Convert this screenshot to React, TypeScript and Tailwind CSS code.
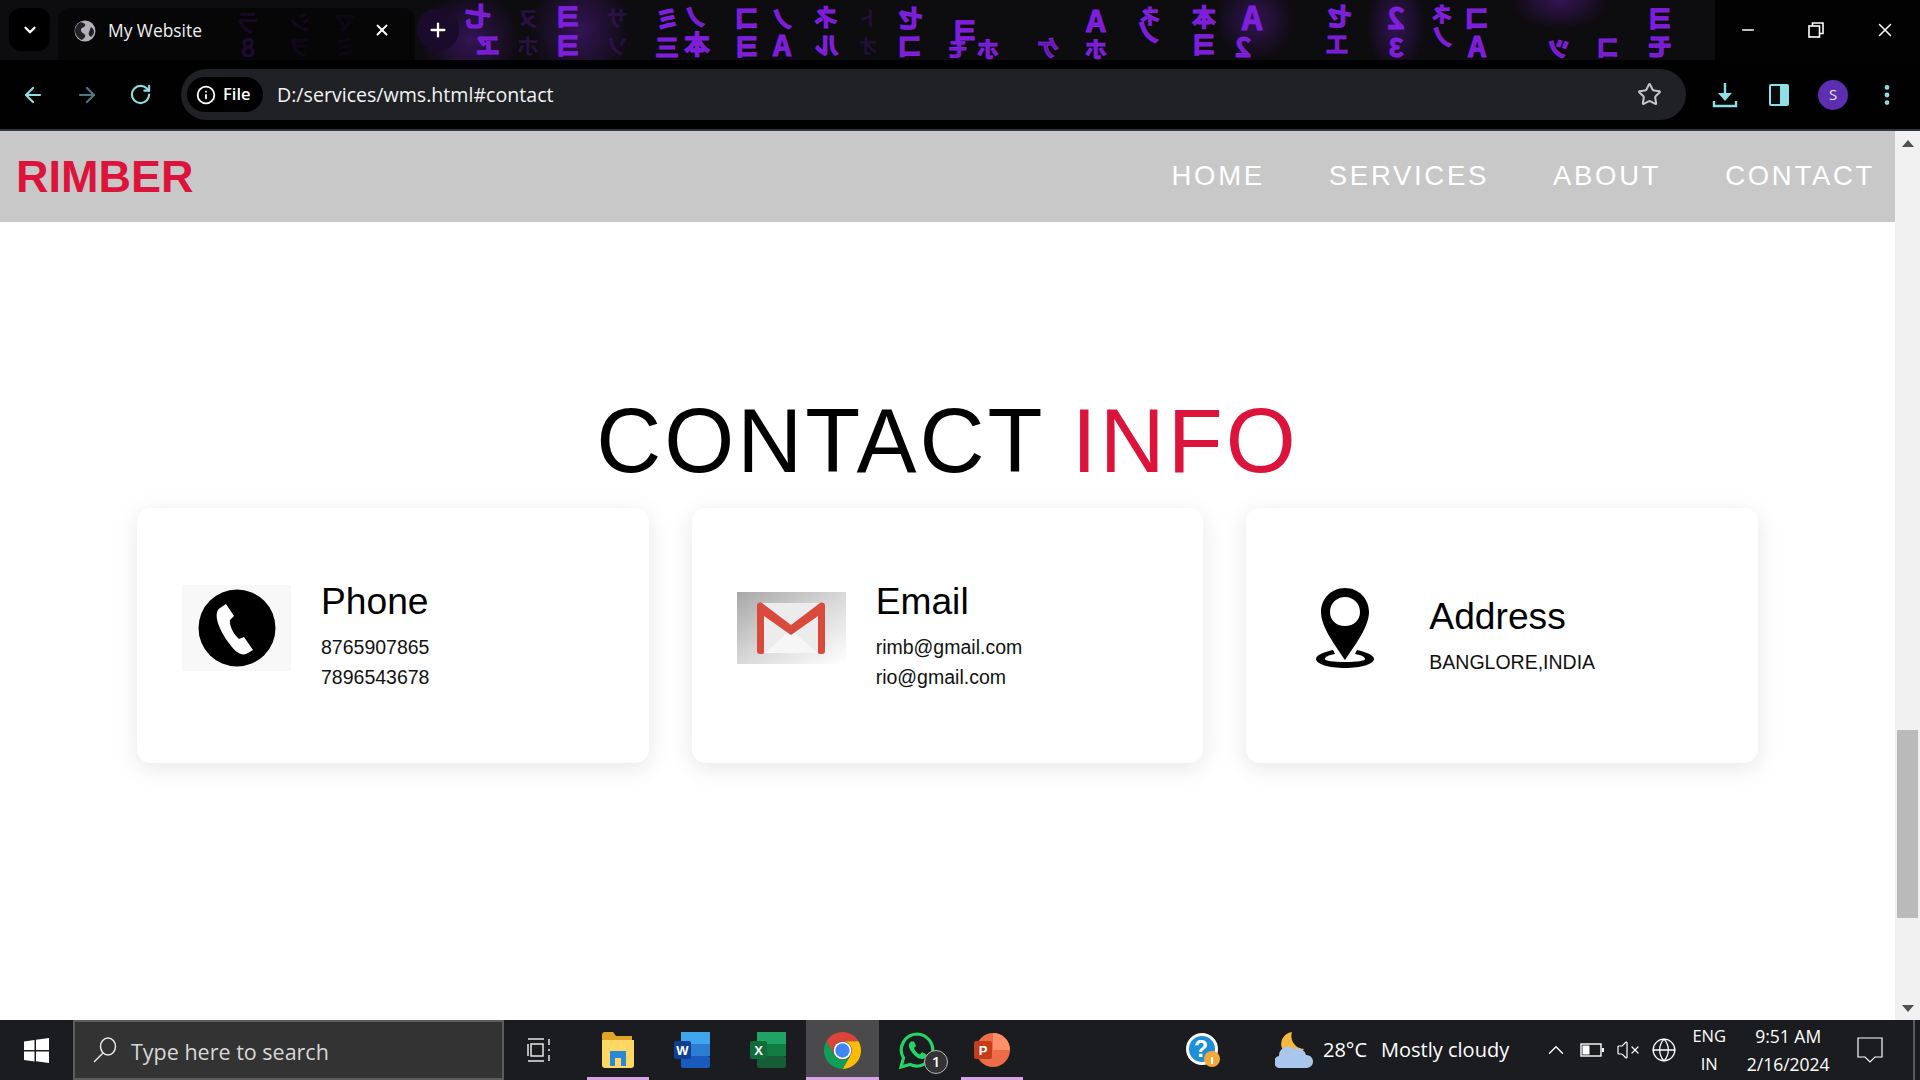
import type { ReactNode } from "react";
import { ArrowLeft, ArrowRight, RotateCw, Star, Info, ChevronDown, Plus, X, Minus, MoreVertical, ChevronUp, VolumeX, Globe } from "lucide-react";

// wallpaper glyphs: x, baseline, char, size, opacity
const glyphs: [number, number, string, number, number][] = [
  [248, 32, "ラ", 24, 0.28],[248, 57, "8", 26, 0.42],[300, 30, "シ", 22, 0.22],[300, 55, "ヲ", 22, 0.2],[345, 30, "マ", 22, 0.18],[345, 55, "ミ", 22, 0.16],
  [478, 26, "七", 26, 0.9],[488, 54, "ヱ", 24, 0.85],
  [528, 26, "ヌ", 22, 0.25],[528, 54, "ホ", 22, 0.25],[568, 26, "ヨ", 26, 0.95],[568, 55, "ヨ", 26, 0.95],
  [617, 26, "サ", 22, 0.2],[617, 54, "ソ", 22, 0.2],[667, 28, "ミ", 24, 0.95],[667, 56, "三", 24, 0.95],[695, 26, "ノ", 24, 0.9],[697, 54, "本", 26, 0.95],
  [747, 28, "コ", 26, 0.95],[747, 56, "ヨ", 26, 0.95],[782, 28, "ノ", 24, 0.95],[782, 56, "A", 28, 0.95],
  [826, 26, "ネ", 24, 0.95],[827, 54, "ル", 24, 0.95],[868, 26, "ト", 20, 0.2],[868, 54, "オ", 20, 0.2],
  [910, 28, "セ", 26, 0.95],[910, 56, "コ", 26, 0.95],[965, 40, "ヨ", 26, 0.95],[988, 57, "ホ", 22, 0.9],[958, 57, "モ", 20, 0.9],
  [1048, 56, "ケ", 22, 0.7],[1096, 32, "A", 30, 0.95],[1096, 57, "ホ", 22, 0.95],[1148, 42, "ノ", 26, 0.95],[1150, 24, "ネ", 20, 0.95],
  [1204, 26, "本", 24, 0.95],[1204, 54, "ヨ", 26, 0.95],[1252, 30, "A", 32, 0.95],[1243, 57, "2", 28, 0.95],
  [1339, 26, "セ", 26, 0.95],[1337, 52, "工", 22, 0.9],[1396, 29, "2", 30, 0.95],[1396, 57, "3", 26, 0.95],
  [1442, 22, "ネ", 20, 0.95],[1442, 46, "ノ", 24, 0.95],[1477, 28, "コ", 26, 0.95],[1477, 57, "A", 28, 0.95],
  [1559, 56, "ッ", 26, 0.9],[1608, 56, "コ", 24, 0.9],[1660, 28, "ヨ", 26, 0.95],[1660, 56, "モ", 26, 0.9],
];

function MatrixBackdrop() {
  return (
    <svg aria-hidden="true" className="absolute inset-0" width="1920" height="129" viewBox="0 0 1920 129">
      <defs>
        <radialGradient id="glow">
          <stop offset="0" stopColor="#7a22d8" stopOpacity="0.35" />
          <stop offset="1" stopColor="#7a22d8" stopOpacity="0" />
        </radialGradient>
      </defs>
      <rect width="1920" height="129" fill="#0d0c0f" />
      <ellipse cx="580" cy="30" rx="50" ry="60" fill="url(#glow)" />
      <ellipse cx="470" cy="40" rx="50" ry="50" fill="url(#glow)" />
      <ellipse cx="1396" cy="25" rx="30" ry="50" fill="url(#glow)" />
      <ellipse cx="1255" cy="20" rx="40" ry="40" fill="url(#glow)" />
      <ellipse cx="1560" cy="0" rx="50" ry="30" fill="url(#glow)" />
      {glyphs.map(([x, y, ch, size, o], i) => (
        <text
          key={i}
          x={-x}
          y={y}
          fontSize={size}
          fontWeight={700}
          fill="#8420e4"
          stroke="#8420e4"
          strokeWidth={o > 0.5 ? 1 : 0}
          fillOpacity={o}
          transform="scale(-1 1)"
          textAnchor="middle"
          fontFamily="'Noto Sans CJK JP', sans-serif"
        >
          {ch}
        </text>
      ))}
      <rect y="60" width="1920" height="69" fill="#000" fillOpacity="0.9" />
      <rect x="1715" width="205" height="60" fill="#000" fillOpacity="0.82" />
    </svg>
  );
}

function BrowserChrome() {
  return (
    <header className="relative h-[131px] shrink-0 border-b-2 border-[#2c3a3d] font-['Open_Sans',sans-serif] text-white">
      <MatrixBackdrop />
      {/* Tab strip */}
      <div className="relative flex h-[60px] items-start pt-2">
        <div className="ml-[9px] flex h-[43px] w-[41px] items-center justify-center rounded-xl bg-black">
          <ChevronDown size={18} strokeWidth={3} />
        </div>
        <div className="ml-2 flex h-[52px] w-[357px] items-center rounded-t-xl bg-black/50 pb-[6px] pl-4 pr-6">
          <svg width="22" height="22" viewBox="0 0 22 22">
            <circle cx="11" cy="11" r="10.5" fill="#b3b0ba" />
            <path d="M7 2c3 1 5 2 4 4s-4 1-4 4 3 3 4 5-1 3-3 5c-3-1-7-5-7-9s3-8 6-9zM17 7c2 1 3 3 3 5s-2 4-3 5c-2-1-3-3-2-5s1-3 2-5z" fill="#242228" />
          </svg>
          <span className="ml-3 text-[17.4px] leading-none text-[#f1eef4]">My Website</span>
          <X size={18} strokeWidth={2.5} className="ml-auto -translate-y-[1px]" />
        </div>
        <div className="ml-[2px] flex h-[43px] w-[42px] items-center justify-center rounded-full bg-[#1a0a2c]">
          <Plus size={22} strokeWidth={2.5} />
        </div>
        <div className="ml-auto flex h-[44px] items-center">
          <div className="flex w-[69px] justify-center"><Minus size={18} strokeWidth={2} /></div>
          <div className="flex w-[68px] justify-center">
            <svg width="16" height="16" viewBox="0 0 16 16" fill="none" stroke="#fff" strokeWidth="1.6">
              <rect x="1" y="4" width="10.5" height="11" />
              <path d="M4.5 4V1H15v10.500h-3.500" />
            </svg>
          </div>
          <div className="flex w-[70px] justify-center"><X size={22} strokeWidth={1.6} /></div>
        </div>
      </div>
      {/* Toolbar */}
      <div className="relative flex h-[69px] items-start pt-[9px]">
        <div className="flex h-[51px] w-[181px] items-center text-[#8fdfe4]">
          <ArrowLeft size={24} strokeWidth={2.2} className="ml-[21px]" />
          <ArrowRight size={24} strokeWidth={2.2} className="ml-[30px] text-[#4a7b80]" />
          <RotateCw size={23} strokeWidth={2.2} className="ml-[30px]" />
        </div>
        <div className="flex h-[51px] w-[1505px] items-center rounded-full bg-[#202124] pl-[6px] pr-[24px]">
          <div className="flex h-[35px] w-[76px] items-center rounded-full bg-black pl-[9px]">
            <Info size={20} strokeWidth={2.2} />
            <span className="ml-[7px] text-[16.5px] font-semibold leading-none">File</span>
          </div>
          <span className="ml-[14px] text-[19.6px] leading-none text-[#f3f3f3]">D:/services/wms.html#contact</span>
          <Star size={25} strokeWidth={2} className="ml-auto text-[#c5c5c8]" />
        </div>
        <div className="flex h-[51px] flex-1 items-center text-[#8fdfe4]">
          <svg width="26" height="26" viewBox="0 0 26 26" className="ml-[26px]" fill="none" stroke="currentColor" strokeWidth="2.4">
            <path d="M13 1v12" />
            <path d="M6 11h14l-7 8z" fill="currentColor" strokeWidth="0" />
            <path d="M2 19v5h22v-5" />
          </svg>
          <svg width="22" height="24" viewBox="0 0 22 24" className="ml-[30px]">
            <rect x="1" y="1" width="20" height="22" rx="2" fill="#8fdfe4" />
            <rect x="3" y="3" width="9" height="18" fill="#0b0b0e" />
          </svg>
          <div className="ml-[28px] flex h-[30px] w-[30px] items-center justify-center rounded-full bg-[#5b2fb0] text-[15px] text-[#e8e2f5]">S</div>
          <MoreVertical size={26} strokeWidth={2.4} className="ml-[26px]" />
        </div>
      </div>
    </header>
  );
}

function PhoneIcon() {
  return (
    <div className="flex h-[86px] w-[109px] items-center justify-center bg-[#f8f8f8]">
      <svg width="78" height="78" viewBox="0 0 78 78">
        <circle cx="39" cy="39" r="38.500" fill="#000" />
        <path d="M22 19l6-4 8 12-4 4c-1 3 2 13 9 19l5-2 9 13-5 3c-3 2-7 2-11-1C33 58 21 42 19 30c-1-5 0-9 3-11z" fill="#fff" />
        <path d="M29 14l10 15M48 47l10 14" stroke="#000" strokeWidth="1.600" fill="none" />
      </svg>
    </div>
  );
}

function GmailIcon() {
  return (
    <div className="flex h-[72px] w-[109px] items-center justify-center bg-gradient-to-br from-[#a8a8a8] via-[#d8d8d8] to-[#ffffff]">
      <svg width="68" height="52" viewBox="0 0 68 52">
        <rect x="2" y="1" width="64" height="50" rx="2" fill="#ececec" />
        <path d="M8 51L34 27l26 24z" fill="#f6f6f6" />
        <path d="M0 3c0-2 3-3 5-2l29 22L63 1c2-1 5 0 5 2v46c0 2-1 3-3 3h-2c-2 0-2-1-2-3V14L34 33 7 14v35c0 2 0 3-2 3H3c-2 0-3-1-3-3z" fill="#d9493c" />
      </svg>
    </div>
  );
}

function PinIcon() {
  return (
    <div className="flex h-[86px] w-[108px] items-center justify-center">
      <svg width="58" height="80" viewBox="0 0 58 80">
        <path fillRule="evenodd" d="M29 0C15 0 5 11 5 24c0 15 14 33 24 48 10-15 24-33 24-48C53 11 43 0 29 0zm0 9c9 0 15 7 15 15s-6 14-15 14-15-6-15-14S20 9 29 9z" fill="#000" />
        <path d="M17 62C8 64 0 67 0 71c0 5 13 9 29 9s29-4 29-9c0-4-8-7-17-9l-2 4c7 1 10 3 10 5 0 2-8 3-20 3s-20-1-20-3c0-2 3-4 10-5z" fill="#000" />
      </svg>
    </div>
  );
}

const cards = [
  { title: "Phone", lines: ["8765907865", "7896543678"], icon: <PhoneIcon /> },
  { title: "Email", lines: ["rimb@gmail.com", "rio@gmail.com"], icon: <GmailIcon /> },
  { title: "Address", lines: ["BANGLORE,INDIA"], icon: <PinIcon /> },
];

function Page() {
  return (
    <div className="flex min-w-0 flex-1 flex-col overflow-hidden bg-white font-['Liberation_Sans',Arial,sans-serif]">
      <nav className="flex h-[91px] shrink-0 items-center justify-between bg-[#c8c8c8] pl-4 pr-[20px]">
        <span className="text-[45px] font-bold leading-none text-[#dc143c]">RIMBER</span>
        <ul className="flex gap-[64px] pb-[2px] text-[27.5px] leading-none tracking-[2.7px] text-white">
          <li>HOME</li>
          <li>SERVICES</li>
          <li>ABOUT</li>
          <li>CONTACT</li>
        </ul>
      </nav>
      <section className="flex flex-col px-[137px] pt-[168px]">
        <h1 className="text-center text-[90px] font-normal leading-[103px] tracking-[3px] text-black">
          CONTACT <span className="text-[#dc143c]">INFO</span>
        </h1>
        <div className="mt-[15px] grid grid-cols-3 gap-[43px]">
          {cards.map((c) => (
            <div key={c.title} className="flex h-[255px] items-center rounded-[14px] bg-white pl-[45px] shadow-[0_5px_25px_rgba(0,0,0,0.1)]">
              <div className="mb-[15px] shrink-0">{c.icon}</div>
              <div className="ml-[30px]">
                <h3 className="mb-[10px] text-[37.2px] font-normal leading-[42px] text-black">{c.title}</h3>
                {c.lines.map((l) => (
                  <p key={l} className="text-[19.5px] leading-[30px] text-[#111]">{l}</p>
                ))}
              </div>
            </div>
          ))}
        </div>
      </section>
    </div>
  );
}

function Scrollbar() {
  return (
    <div className="flex w-[25px] shrink-0 flex-col items-center bg-[#f1f1f1]">
      <div className="mt-[9px] h-0 w-0 border-x-[6px] border-b-[7px] border-x-transparent border-b-[#505050]" />
      <div className="mt-[583px] h-[188px] w-[21px] bg-[#bababa]" />
      <div className="mt-[87px] h-0 w-0 border-x-[6px] border-t-[7px] border-x-transparent border-t-[#505050]" />
    </div>
  );
}

function AppSlot({ children, width, active, underline }: { children: ReactNode; width: string; active?: boolean; underline?: boolean }) {
  return (
    <div className={`relative flex h-full items-center justify-center ${width} ${active ? "bg-[#4a4a4d]" : ""}`}>
      {children}
      {underline ? <div className={`absolute bottom-0 h-[3px] bg-[#d9a2e8] ${active ? "inset-x-0" : "inset-x-[6px]"}`} /> : null}
    </div>
  );
}

function Taskbar() {
  return (
    <footer className="flex h-[60px] shrink-0 items-center bg-[#1b1c1f] font-['Open_Sans',sans-serif] text-white">
      <div className="flex h-full w-[73px] items-center justify-center">
        <svg width="25" height="25" viewBox="0 0 25 25" fill="#fff">
          <path d="M0 3.500l10.500-1.500v10H0zM12 1.800L25 0v12H12zM0 13.500h10.500v10L0 22zM12 13.500h13V25l-13-1.800z" />
        </svg>
      </div>
      <div className="flex h-full w-[431px] items-center border-2 border-[#5c5c5c] bg-[#333333] pl-[18px]">
        <svg width="24" height="26" viewBox="0 0 24 26" fill="none" stroke="#e8e8e8" strokeWidth="1.500">
          <ellipse cx="15" cy="9.500" rx="7.500" ry="8.500" />
          <path d="M10 16L1 25" />
        </svg>
        <span className="ml-[14px] pt-[3px] text-[21.500px] leading-none text-[#d8d8d8]">Type here to search</span>
      </div>
      <svg width="26" height="26" viewBox="0 0 26 26" className="ml-[23px]" fill="none" stroke="#e8e8e8" strokeWidth="1.500">
        <path d="M1 2h16M1 24h16M4 7h12v12H4zM1 7v12M22 2v6M22 12v2M22 18v6" />
      </svg>
      <div className="ml-[28px] flex h-full items-center">
        <AppSlot width="w-[74px]" underline>
          <svg width="32" height="36" viewBox="0 0 32 36">
            <path d="M0 3c0-2 1-3 3-3h8l3 4h16v6H0z" fill="#e0a526" />
            <path d="M0 8h32v25c0 2-1 3-3 3H3c-2 0-3-1-3-3z" fill="#ffd763" />
            <path d="M8 34V19h16v15h-5v-8h-6v8z" fill="#2b88d8" />
          </svg>
        </AppSlot>
        <AppSlot width="w-[74px]">
          <svg width="36" height="36" viewBox="0 0 36 36">
            <rect x="7" width="29" height="12" fill="#41a5ee" />
            <rect x="7" y="12" width="29" height="12" fill="#2b7cd3" />
            <rect x="7" y="24" width="29" height="12" rx="2" fill="#185abd" />
            <rect y="9" width="17" height="18" rx="2" fill="#103f91" />
            <text x="8.500" y="23" textAnchor="middle" fontSize="13" fontWeight="700" fill="#fff" fontFamily="'Liberation Sans'">W</text>
          </svg>
        </AppSlot>
        <AppSlot width="w-[77px]">
          <svg width="36" height="36" viewBox="0 0 36 36">
            <rect x="7" width="29" height="12" fill="#21a366" />
            <rect x="7" y="12" width="29" height="12" fill="#107c41" />
            <rect x="7" y="24" width="29" height="12" rx="2" fill="#185c37" />
            <rect y="9" width="17" height="18" rx="2" fill="#0e6b3a" />
            <text x="8.500" y="23" textAnchor="middle" fontSize="13" fontWeight="700" fill="#fff" fontFamily="'Liberation Sans'">X</text>
          </svg>
        </AppSlot>
        <AppSlot width="w-[73px]" active underline>
          <svg width="37" height="37" viewBox="2 2 44 44">
            <path d="M43.050 13H24a11 11 0 0 0-9.530 16.500L4.950 13a22 22 0 0 1 38.100 0z" fill="#db4437" />
            <path d="M43.050 13A22 22 0 0 1 24 46l9.530-16.500A11 11 0 0 0 24 13z" fill="#fbbc05" />
            <path d="M4.950 13A22 22 0 0 0 24 46l9.530-16.500a11 11 0 0 1-19.060 0z" fill="#0f9d58" />
            <circle cx="24" cy="24" r="10.500" fill="#fff" />
            <circle cx="24" cy="24" r="8.500" fill="#4285f4" />
          </svg>
        </AppSlot>
        <AppSlot width="w-[76px]">
          <div className="relative">
            <svg width="36" height="37" viewBox="0 0 36 37" fill="none">
              <path d="M18 2A16 16 0 0 0 4.500 26L2 35l9-2.500A16 16 0 1 0 18 2z" stroke="#25d366" strokeWidth="3.200" />
              <path d="M12 9.500c-2.500 2-3 5 0 9.500s7 8 11 8c3 0 4.500-2 4.500-4.500l-4.500-2.500-2 2.500c-3-1-5-4-6-6.500l2-2-2-4.500z" fill="#25d366" />
            </svg>
            <div className="absolute -bottom-[5px] -right-[13px] flex h-[24px] w-[24px] items-center justify-center rounded-full border border-[#b8b8b8] bg-[#333336] text-[15px] font-semibold leading-none">1</div>
          </div>
        </AppSlot>
        <AppSlot width="w-[74px]" underline>
          <svg width="36" height="36" viewBox="0 0 36 36">
            <circle cx="19" cy="18" r="17" fill="#ed6c47" />
            <path d="M19 1a17 17 0 0 1 17 17H19z" fill="#ff8f6b" />
            <rect y="9" width="18" height="18" rx="2" fill="#c43e1c" />
            <text x="9" y="23" textAnchor="middle" fontSize="13" fontWeight="700" fill="#fff" fontFamily="'Liberation Sans'">P</text>
          </svg>
        </AppSlot>
      </div>
      <svg width="36" height="36" viewBox="0 0 36 36" className="ml-[156px]">
        <circle cx="17" cy="17" r="16" fill="#fff" />
        <circle cx="17" cy="17" r="13" fill="#1c8fd8" />
        <text x="16" y="25" textAnchor="middle" fontSize="23" fontWeight="700" fill="#fff" fontFamily="'Liberation Sans'">?</text>
        <circle cx="27" cy="27" r="8" fill="#f2a93b" />
        <rect x="26" y="25" width="2" height="7" fill="#fff" />
      </svg>
      <svg width="38" height="36" viewBox="0 0 38 36" className="ml-[54px]">
        <path d="M17 0a12 12 0 1 0 12 17A13 13 0 0 1 17 0z" fill="#f5b83d" />
        <path d="M6 36a6 6 0 0 1-2-12 9 9 0 0 1 15-7 9 9 0 0 1 12 6 6.500 6.500 0 0 1 1 13z" fill="#a9c6ec" />
      </svg>
      <span className="ml-[10px] text-[20px] leading-none">28°C</span>
      <span className="ml-[14px] text-[20px] leading-none">Mostly cloudy</span>
      <ChevronUp size={26} strokeWidth={1.300} className="ml-[34px]" />
      <svg width="24" height="14" viewBox="0 0 24 14" className="ml-[11px]" fill="none">
        <rect x="1" y="1" width="20" height="12" stroke="#fff" strokeWidth="1.400" />
        <rect x="2.500" y="2.500" width="7" height="9" fill="#fff" />
        <rect x="22" y="5" width="2" height="4" fill="#fff" />
      </svg>
      <VolumeX size={24} strokeWidth={1.200} className="ml-[12px]" />
      <Globe size={26} strokeWidth={1.200} className="ml-[11px]" />
      <div className="ml-[12px] flex w-[40px] flex-col items-center text-[16.500px] leading-[28px]">
        <span>ENG</span>
        <span>IN</span>
      </div>
      <div className="ml-[14px] flex w-[90px] flex-col items-center text-[17.500px] leading-[28px]">
        <span>9:51 AM</span>
        <span>2/16/2024</span>
      </div>
      <svg width="26" height="26" viewBox="0 0 26 26" className="ml-[24px]" fill="none" stroke="#fff" strokeWidth="1.200">
        <path d="M1 1h24v19h-7l-5 5-5-5H1z" />
      </svg>
      <div className="ml-auto mr-[5px] h-full w-[2px] bg-[#5a5a5a]" />
    </footer>
  );
}

export default function App() {
  return (
    <div className="flex h-screen w-full flex-col overflow-hidden">
      <BrowserChrome />
      <div className="flex min-h-0 flex-1">
        <Page />
        <Scrollbar />
      </div>
      <Taskbar />
    </div>
  );
}
